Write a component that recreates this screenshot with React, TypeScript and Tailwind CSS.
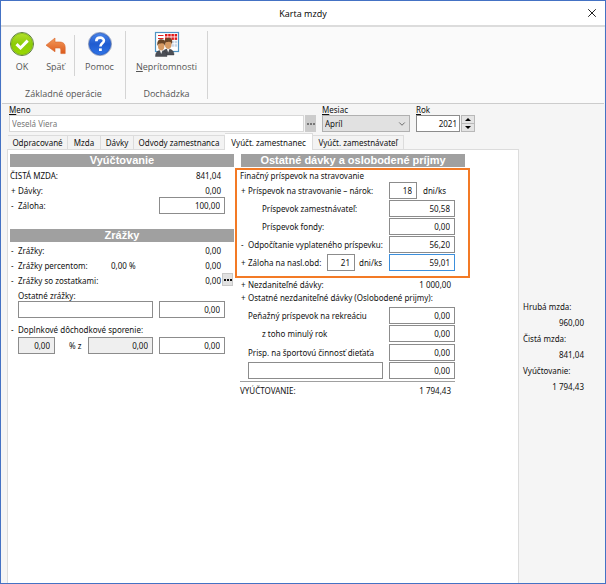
import { useState } from 'react';
import { X, ChevronDown } from 'lucide-react';
import clsx from 'clsx';

const tabs = [
    { name: 'Odpracované', width: 'w-[60px]' },
    { name: 'Mzda', width: 'w-[33px]' },
    { name: 'Dávky', width: 'w-[33px]' },
    { name: 'Odvody zamestnanca', width: 'w-[91px]' },
    { name: 'Vyúčt. zamestnanec', width: 'w-[88px]' },
    { name: 'Vyúčt. zamestnávateľ', width: 'w-[91px]' },
];

const totals = [
    { name: 'Hrubá mzda:', value: '960,00' },
    { name: 'Čistá mzda:', value: '841,04' },
    { name: 'Vyúčtovanie:', value: '1 794,43' },
];

function OkIcon() {
    return (
        <svg viewBox="0 0 26 26" className="size-[26px]" aria-hidden="true">
            <defs>
                <linearGradient id="ok" x1="0" y1="0" x2="0" y2="1">
                    <stop offset="0" stopColor="#b4e02c" />
                    <stop offset="0.5" stopColor="#8ccc08" />
                    <stop offset="1" stopColor="#9ad800" />
                </linearGradient>
            </defs>
            <circle cx="13" cy="13" r="11.5" fill="#e8f2d8" stroke="#5f7d3c" strokeWidth="1" />
            <circle cx="13" cy="13" r="10.6" fill="url(#ok)" stroke="#79b800" strokeWidth="0.8" />
            <path d="M7.5 13.2 L11.5 17 L18.7 9.6" fill="none" stroke="#fff" strokeWidth="3" />
        </svg>
    );
}

function BackIcon() {
    return (
        <svg viewBox="0 0 26 26" className="size-[26px]" aria-hidden="true">
            <defs>
                <linearGradient id="back" x1="0" y1="0" x2="0" y2="1">
                    <stop offset="0" stopColor="#f39a5c" />
                    <stop offset="1" stopColor="#dc5a1c" />
                </linearGradient>
            </defs>
            <path
                d="M3 14.2 L12 7 V11 H16.5 C20.8 11 22.2 13.4 22.2 16.8 V22.6 H17.8 V19.2 C17.8 17.6 17.2 17 15.8 17 H12 V20.8 Z"
                fill="url(#back)"
                stroke="#d9642a"
                strokeWidth="0.6"
            />
        </svg>
    );
}

function HelpIcon() {
    return (
        <svg viewBox="0 0 26 26" className="size-[26px]" aria-hidden="true">
            <defs>
                <linearGradient id="help" x1="0" y1="0" x2="0" y2="1">
                    <stop offset="0" stopColor="#4a86ea" />
                    <stop offset="0.5" stopColor="#1f5bd0" />
                    <stop offset="1" stopColor="#2f74e6" />
                </linearGradient>
            </defs>
            <circle cx="13" cy="13" r="11.6" fill="#dfe6f4" stroke="#8796b5" strokeWidth="0.8" />
            <circle cx="13" cy="13" r="10.8" fill="url(#help)" stroke="#1b4db5" strokeWidth="0.6" />
            <path
                d="M9.3 10.3 C9.3 5.4 17 5.6 16.9 9.8 C16.8 12.4 13.4 12.4 13.4 15.6"
                fill="none"
                stroke="#fff"
                strokeWidth="2.6"
            />
            <rect x="12" y="17.4" width="2.8" height="2.6" fill="#fff" />
        </svg>
    );
}

function Person({ x, y }: { x: number; y: number }) {
    return (
        <g transform={`translate(${x} ${y})`}>
            <path d="M0 25 C0 20.5 2 19.4 5.5 18.8 C9 19.4 11.5 20.5 11.5 25 Z" fill="#4b4e55" stroke="#34363b" strokeWidth="0.4" />
            <path d="M4.2 18.6 L5.7 22.4 L7.2 18.6 Z" fill="#f4f4f4" />
            <ellipse cx="5.7" cy="14.6" rx="3.2" ry="4.3" fill="#d79a62" />
            <path d="M1.9 14.5 C1.2 9.4 3.6 7.6 6 7.8 C9.4 7.8 10.4 10.6 9.4 14.5 C8.8 12 7.4 11.6 5.4 12 C3.4 12 2.6 12.6 1.9 14.5 Z" fill="#6a4526" />
        </g>
    );
}

function AbsenceIcon() {
    const columns = [0, 1, 2, 3];
    return (
        <svg viewBox="0 0 26 26" className="size-[26px]" aria-hidden="true">
            <rect x="1.5" y="1.5" width="23" height="19" fill="#fff" stroke="#4f94c4" strokeWidth="1.2" />
            <path d="M4 4.5 H9.5 M4 7.5 H9.5" stroke="#d22" strokeWidth="1" />
            {columns.map((c) => (
                <g key={c}>
                    <rect x={11 + c * 3.2} y="3" width="2.5" height="2.5" fill="#e01818" />
                    <rect x={11 + c * 3.2} y="6.4" width="2.5" height="2.5" fill="#e01818" />
                    <rect x={11 + c * 3.2} y="9.8" width="2.5" height="2.5" fill="#c8d6e6" />
                    <rect x={11 + c * 3.2} y="13.2" width="2.5" height="2.5" fill="#c8d6e6" />
                </g>
            ))}
            <Person x={8.5} y={-1} />
            <Person x={1.5} y={0.5} />
        </svg>
    );
}

function Ribbon() {
    const button = 'flex flex-col items-center gap-[3px] text-[9px] leading-[14px]';
    return (
        <div className="mx-px flex h-[77px] border-b border-[#cccccc] bg-[#fafafa] pt-1 font-['Open_Sans',sans-serif] text-[#555555]">
            <div className="flex h-[68px] w-[124px] flex-col justify-between border-r border-[#d4d4d4]">
                <div className="flex">
                    <button className={clsx(button, 'w-[40px]')}>
                        <OkIcon />
                        <span>OK</span>
                    </button>
                    <button className={clsx(button, 'w-[27px]')}>
                        <BackIcon />
                        <span>Späť</span>
                    </button>
                    <div className="mt-1 ml-[5px] h-[41px] w-px bg-[#d4d4d4]" />
                    <button className={clsx(button, 'w-[49px]')}>
                        <HelpIcon />
                        <span>Pomoc</span>
                    </button>
                </div>
                <p className="text-center text-[9px] leading-[10px]">Základné operácie</p>
            </div>
            <div className="flex h-[68px] w-[82px] flex-col justify-between border-r border-[#d4d4d4]">
                <button className={button}>
                    <AbsenceIcon />
                    <span><u>N</u>eprítomnosti</span>
                </button>
                <p className="text-center text-[9px] leading-[10px]">Dochádzka</p>
            </div>
        </div>
    );
}

function Heading({ children }: { children: string }) {
    return (
        <h2 className="h-[13px] bg-[#a0a0a0] text-center font-['Liberation_Sans',sans-serif] text-[11px] leading-[13px] font-bold text-white">
            {children}
        </h2>
    );
}

type FieldProps = {
    id: string;
    value?: string;
    width?: string;
    disabled?: boolean;
    focused?: boolean;
    label?: string;
};

function Field({ id, value, width = 'w-[66px]', disabled, focused, label }: FieldProps) {
    return (
        <input
            id={id}
            defaultValue={value}
            disabled={disabled}
            aria-label={label}
            className={clsx(
                'h-[17px] shrink-0 border px-1 text-right outline-none',
                width,
                focused ? 'border-[#3c8fdc]' : 'border-[#8c8c8c]',
                disabled ? 'bg-[#efefef]' : 'bg-white'
            )}
        />
    );
}

function Sign({ children }: { children?: string }) {
    return <span className="w-2 shrink-0 pl-px">{children}</span>;
}

function Dots() {
    return (
        <>
            <i className="size-[2px] bg-current" />
            <i className="size-[2px] bg-current" />
            <i className="size-[2px] bg-current" />
        </>
    );
}

function Settlement() {
    return (
        <section className="w-[224px]">
            <Heading>Vyúčtovanie</Heading>
            <div className="pr-[13px]">
                <div className="mt-px flex h-[15px] justify-between">
                    <span>ČISTÁ MZDA:</span>
                    <span>841,04</span>
                </div>
                <div className="flex h-[14px]">
                    <Sign>+</Sign>
                    <span className="grow">Dávky:</span>
                    <span>0,00</span>
                </div>
            </div>
            <div className="flex h-[17px] items-center pr-[9px]">
                <Sign>-</Sign>
                <label htmlFor="advance" className="grow">Záloha:</label>
                <Field id="advance" value="100,00" />
            </div>

            <div className="mt-[15px]">
                <Heading>Zrážky</Heading>
            </div>
            <div className="mt-px flex h-[15px] pr-[13px]">
                <Sign>-</Sign>
                <span className="grow">Zrážky:</span>
                <span>0,00</span>
            </div>
            <div className="flex h-[15px] pr-[13px]">
                <Sign>-</Sign>
                <span className="w-[93px]">Zrážky percentom:</span>
                <span className="grow">0,00 %</span>
                <span>0,00</span>
            </div>
            <div className="flex h-[15px] pr-px">
                <Sign>-</Sign>
                <span className="grow">Zrážky so zostatkami:</span>
                <span>0,00</span>
                <button aria-label="Zostatky" className="ml-px flex h-[13px] w-[11px] items-center justify-center gap-px border border-[#c8c8c8] bg-[#e1e1e1]">
                    <Dots />
                </button>
            </div>
            <label htmlFor="other-name" className="block h-[13px] pl-2">Ostatné zrážky:</label>
            <div className="flex gap-[6px] pl-2">
                <Field id="other-name" width="w-[135px]" />
                <Field id="other-amount" value="0,00" label="Ostatné zrážky suma" />
            </div>
            <div className="mt-1 flex h-[15px]">
                <Sign>-</Sign>
                <label htmlFor="pension-percent">Doplnkové dôchodkové sporenie:</label>
            </div>
            <div className="flex items-center pl-2">
                <Field id="pension-percent" value="0,00" width="w-[37px]" disabled />
                <label htmlFor="pension-base" className="w-[33px] pl-[14px] whitespace-nowrap">% z</label>
                <Field id="pension-base" value="0,00" width="w-[65px]" disabled />
                <span className="w-[6px]" />
                <Field id="pension-amount" value="0,00" label="Doplnkové dôchodkové sporenie suma" />
            </div>
        </section>
    );
}

function Benefits() {
    return (
        <section className="w-[235px]">
            <div className="pr-[5px] pl-[6px]">
                <Heading>Ostatné dávky a oslobodené príjmy</Heading>
            </div>
            <div className="mt-px border-2 border-[#f37a25] pb-[5px] pl-[3px]">
                <p className="h-[11px] leading-[12px]">Finačný príspevok na stravovanie</p>
                <div className="flex h-[18px] items-center">
                    <Sign>+</Sign>
                    <label htmlFor="meal-days" className="w-[141px]">Príspevok na stravovanie – nárok:</label>
                    <Field id="meal-days" value="18" width="w-[28px]" />
                    <span className="pl-[6px]">dni/ks</span>
                </div>
                <div className="flex h-[18px] items-center">
                    <label htmlFor="meal-employer" className="w-[149px] pl-[22px]">Príspevok zamestnávateľ:</label>
                    <Field id="meal-employer" value="50,58" />
                </div>
                <div className="flex h-[18px] items-center">
                    <label htmlFor="meal-funds" className="w-[149px] pl-[22px]">Príspevok fondy:</label>
                    <Field id="meal-funds" value="0,00" />
                </div>
                <div className="flex h-[18px] items-center">
                    <Sign>-</Sign>
                    <label htmlFor="meal-paid" className="w-[141px] whitespace-nowrap">Odpočítanie vyplateného príspevku:</label>
                    <Field id="meal-paid" value="56,20" />
                </div>
                <div className="flex h-[18px] items-center">
                    <Sign>+</Sign>
                    <label htmlFor="next-days" className="w-[79px] whitespace-nowrap">Záloha na nasl.obd:</label>
                    <Field id="next-days" value="21" width="w-[28px]" />
                    <label htmlFor="next-amount" className="w-[34px] pl-1">dni/ks</label>
                    <Field id="next-amount" value="59,01" focused />
                </div>
            </div>
            <div className="mr-[15px] ml-[5px]">
                <div className="flex h-[13px] pr-1 leading-[13px]">
                    <Sign>+</Sign>
                    <span className="grow">Nezdaniteľné dávky:</span>
                    <span>1 000,00</span>
                </div>
                <div className="flex h-[15px] leading-[13px]">
                    <Sign>+</Sign>
                    <span>Ostatné nezdaniteľné dávky (Oslobodené prijmy):</span>
                </div>
                <div className="flex h-[18px] items-center justify-between pl-2">
                    <label htmlFor="recreation">Peňažný príspevok na rekreáciu</label>
                    <Field id="recreation" value="0,00" />
                </div>
                <div className="flex h-[19px] items-center justify-between pl-[22px]">
                    <label htmlFor="last-year">z toho minulý rok</label>
                    <Field id="last-year" value="0,00" />
                </div>
                <div className="flex h-[18px] items-center justify-between pl-2">
                    <label htmlFor="sport">Prisp. na športovú činnosť dieťaťa</label>
                    <Field id="sport" value="0,00" />
                </div>
                <div className="flex h-[18px] items-center justify-between pl-2">
                    <Field id="custom-name" width="w-[135px]" label="Iná dávka" />
                    <Field id="custom-amount" value="0,00" label="Iná dávka suma" />
                </div>
                <div className="mt-[2px] flex justify-between border-t border-[#a0a0a0] pt-px pr-1">
                    <span>VYÚČTOVANIE:</span>
                    <span>1 794,43</span>
                </div>
            </div>
        </section>
    );
}

export default function App() {
    const [active, setActive] = useState('Vyúčt. zamestnanec');

    return (
        <div className="flex min-h-screen flex-col border border-[#4472c4] bg-[#f5f5f5] font-['Noto_Sans',sans-serif] text-[8px] leading-[15px] text-[#111111]">
            <header className="relative flex h-[26px] items-center justify-center border-b-2 border-[#dcdcdc] bg-white text-black">
                <h1 className="font-['Open_Sans',sans-serif] text-[9px]">Karta mzdy</h1>
                <button aria-label="Zavrieť" className="absolute right-[6px]">
                    <X size={14} strokeWidth={1.5} />
                </button>
            </header>
            <Ribbon />

            <div className="flex items-end pl-2 leading-[11px]">
                <div className="w-[307px]">
                    <label htmlFor="name" className="block"><u>M</u>eno</label>
                    <div className="flex h-[17px] gap-px">
                        <input id="name" defaultValue="Veselá Viera" className="min-w-0 grow border border-[#d8d8d8] bg-white px-[2px] text-[#777777]" />
                        <button aria-label="Vybrať" className="flex w-[11px] items-center justify-center gap-px bg-[#cccccc] text-[#777777]">
                            <Dots />
                        </button>
                    </div>
                </div>
                <div className="relative ml-[6px] w-[88px]">
                    <label htmlFor="month" className="block"><u>M</u>esiac</label>
                    <select id="month" className="block h-[17px] w-full appearance-none border border-[#b0b0b0] bg-[#e1e1e1] px-[2px]">
                        <option>Apríl</option>
                    </select>
                    <ChevronDown size={10} className="pointer-events-none absolute right-[3px] bottom-[3px] text-[#555555]" />
                </div>
                <div className="ml-[6px]">
                    <label htmlFor="year" className="block"><u>R</u>ok</label>
                    <div className="flex h-[17px] gap-px">
                        <input id="year" defaultValue="2021" className="w-[44px] border border-[#8c8c8c] bg-white px-[2px] text-right" />
                        <div className="flex w-[14px] flex-col">
                            <button aria-label="Ďalší rok" className="flex flex-1 items-center justify-center border border-[#b8b8b8] bg-[#e4e4e4]">
                                <svg viewBox="0 0 6 3" className="h-[3px] w-[6px]"><path d="M0 3 L3 0 L6 3 Z" /></svg>
                            </button>
                            <button aria-label="Predošlý rok" className="flex flex-1 items-center justify-center border border-t-0 border-[#b8b8b8] bg-[#e4e4e4]">
                                <svg viewBox="0 0 6 3" className="h-[3px] w-[6px]"><path d="M0 0 L3 3 L6 0 Z" /></svg>
                            </button>
                        </div>
                    </div>
                </div>
            </div>

            <div className="flex grow">
                <main className="flex grow flex-col pl-[6px]">
                    <div role="tablist" className="flex h-[17px] items-end pl-px">
                        {tabs.map((tab) => (
                            <button
                                key={tab.name}
                                role="tab"
                                aria-selected={tab.name === active}
                                onClick={() => setActive(tab.name)}
                                className={clsx(
                                    'border-t border-r border-[#dcdcdc] text-center whitespace-nowrap',
                                    tab.width,
                                    tab.name === active ? 'z-10 -mb-px h-[17px] bg-white' : 'h-[14px] bg-[#f3f3f3] leading-[14px]'
                                )}
                            >
                                {tab.name}
                            </button>
                        ))}
                    </div>
                    <div className="flex grow items-start gap-px border border-b-0 border-[#dcdcdc] bg-white pt-1 pl-[2px]">
                        <Settlement />
                        <Benefits />
                    </div>
                </main>
                <aside className="w-[86px] pt-[167px] pr-[21px] pl-1">
                    <dl className="leading-[16px]">
                        {totals.map((total) => (
                            <div key={total.name}>
                                <dt>{total.name}</dt>
                                <dd className="text-right">{total.value}</dd>
                            </div>
                        ))}
                    </dl>
                </aside>
            </div>
        </div>
    );
}
